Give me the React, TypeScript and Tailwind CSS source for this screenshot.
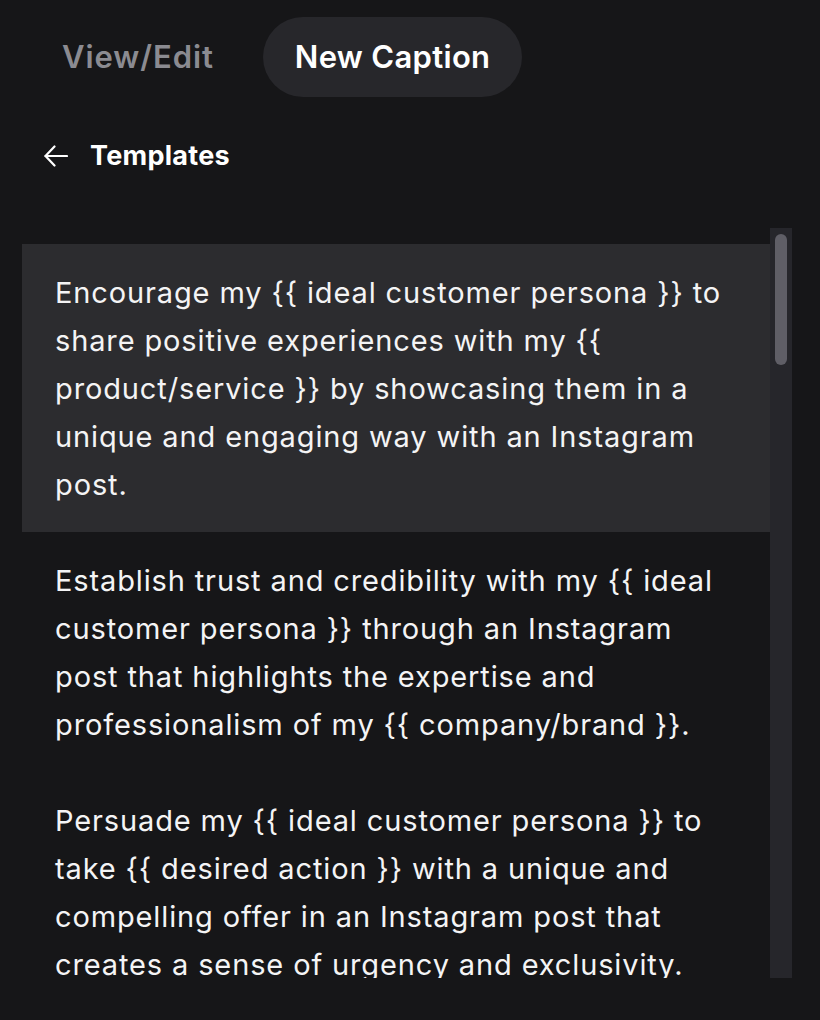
import React from "react";

const templates = [
  "Encourage my {{ ideal customer persona }} to share positive experiences with my {{ product/service }} by showcasing them in a unique and engaging way with an Instagram post.",
  "Establish trust and credibility with my {{ ideal customer persona }} through an Instagram post that highlights the expertise and professionalism of my {{ company/brand }}.",
  "Persuade my {{ ideal customer persona }} to take {{ desired action }} with a unique and compelling offer in an Instagram post that creates a sense of urgency and exclusivity.",
];

export default function App() {
  const active = 0;

  return (
    <div className="w-[820px] h-[1020px] bg-[#161618] text-[#f4f4f5] font-['Inter',sans-serif] overflow-hidden">
      {/* Tabs */}
      <div className="flex items-center gap-[17px] pt-[17px] pl-[30px]">
        <button className="h-[80px] px-8 rounded-full text-[31px] tracking-[0.03em] font-semibold text-[#8b8b91]">View/Edit</button>
        <button className="h-[80px] px-8 rounded-full bg-[#27272b] text-[31px] tracking-[0.01em] font-semibold text-white">New Caption</button>
      </div>

      {/* Back to templates */}
      <div className="flex items-center gap-[22px] pl-[44px] mt-[40px] h-[38px]">
        <svg width="24" height="22" viewBox="0 0 24 22" fill="none" stroke="white" strokeWidth="2.2" strokeLinecap="round" strokeLinejoin="round">
          <path d="M23 11H1.5" />
          <path d="M10.5 1.5L1.5 11l9 9.5" />
        </svg>
        <span className="text-[27px] tracking-[0.01em] font-bold text-white">Templates</span>
      </div>

      {/* Template list */}
      <div className="flex mt-[53px] ml-[22px] w-[770px] h-[750px]">
        <div className="flex-1 overflow-hidden pt-4">
          {templates.map((t, i) => (
            <div
              key={i}
              className={`px-[33px] pt-[25px] pb-[23px] text-[29px] tracking-[0.03em] leading-[48px] ${i === active ? "bg-[#2c2c2f]" : ""}`}
            >
              {t}
            </div>
          ))}
        </div>
        <div className="w-[22px] bg-[#26262b] pt-[6px] flex justify-center">
          <div className="w-[12px] h-[131px] rounded-full bg-[#5f5e66]" />
        </div>
      </div>
    </div>
  );
}
